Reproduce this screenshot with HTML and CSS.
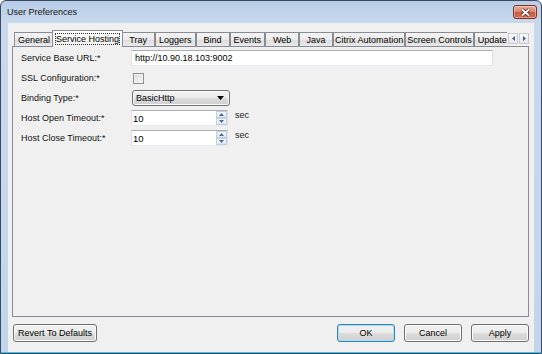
FILE: index.html
```html
<!DOCTYPE html>
<html>
<head>
<meta charset="utf-8">
<title>User Preferences</title>
<link rel="stylesheet" href="styles.css">
</head>
<body>
<div class="window">
  <div class="titlebar">
    <span class="title">User Preferences</span>
    <button class="close" aria-label="Close">
      <svg width="11" height="9" viewBox="0 0 11 9"><path d="M2 1.5 L9 7.5 M9 1.5 L2 7.5" stroke="#5a2016" stroke-width="3.4" fill="none"/><path d="M2 1.5 L9 7.5 M9 1.5 L2 7.5" stroke="#ffffff" stroke-width="1.8" fill="none"/></svg>
    </button>
  </div>
  <div class="client">
    <div class="tabcontrol">
      <div class="tabstrip">
        <div class="tabs">
          <div class="tab">General</div>
          <div class="tab active"><span class="focus">Service Hosting</span></div>
          <div class="tab">Tray</div>
          <div class="tab">Loggers</div>
          <div class="tab">Bind</div>
          <div class="tab">Events</div>
          <div class="tab">Web</div>
          <div class="tab">Java</div>
          <div class="tab tight">Citrix Automation</div>
          <div class="tab tight">Screen Controls</div>
          <div class="tab">Updates</div>
        </div>
        <div class="scroller">
          <button class="arrow" aria-label="Scroll left"><svg width="3" height="5" viewBox="0 0 3 5"><path d="M3 0 L0 2.5 L3 5 Z" fill="#3b5fa0"/></svg></button>
          <button class="arrow" aria-label="Scroll right"><svg width="3" height="5" viewBox="0 0 3 5"><path d="M0 0 L3 2.5 L0 5 Z" fill="#3b5fa0"/></svg></button>
        </div>
      </div>
      <div class="panel">
        <div class="form">
          <div class="label">Service Base URL:*</div>
          <div class="field"><div class="textbox url">http://10.90.18.103:9002</div></div>

          <div class="label">SSL Configuration:*</div>
          <div class="field"><div class="checkbox"></div></div>

          <div class="label">Binding Type:*</div>
          <div class="field">
            <div class="combo"><span class="value">BasicHttp</span>
              <svg width="7" height="4" viewBox="0 0 7 4"><path d="M0 0 H7 L3.5 4 Z" fill="#000"/></svg>
            </div>
          </div>

          <div class="label">Host Open Timeout:*</div>
          <div class="field">
            <div class="spin"><span class="value">10</span>
              <div class="spin-buttons">
                <div class="spin-btn"><svg width="5" height="3" viewBox="0 0 5 3"><path d="M0 3 L2.5 0 L5 3 Z" fill="#4d6a9a"/></svg></div>
                <div class="spin-btn"><svg width="5" height="3" viewBox="0 0 5 3"><path d="M0 0 L5 0 L2.5 3 Z" fill="#4d6a9a"/></svg></div>
              </div>
            </div>
            <span class="unit">sec</span>
          </div>

          <div class="label">Host Close Timeout:*</div>
          <div class="field">
            <div class="spin"><span class="value">10</span>
              <div class="spin-buttons">
                <div class="spin-btn"><svg width="5" height="3" viewBox="0 0 5 3"><path d="M0 3 L2.5 0 L5 3 Z" fill="#4d6a9a"/></svg></div>
                <div class="spin-btn"><svg width="5" height="3" viewBox="0 0 5 3"><path d="M0 0 L5 0 L2.5 3 Z" fill="#4d6a9a"/></svg></div>
              </div>
            </div>
            <span class="unit">sec</span>
          </div>
        </div>
      </div>
    </div>
    <div class="footer">
      <button class="btn revert">Revert To Defaults</button>
      <button class="btn default">OK</button>
      <button class="btn">Cancel</button>
      <button class="btn">Apply</button>
    </div>
  </div>
</div>
</body>
</html>
```

FILE: styles.css
```css
* { box-sizing: border-box; }
html, body { margin: 0; padding: 0; }
body {
  font-family: "Liberation Sans", Arial, sans-serif;
  font-size: 9px;
  color: #000;
  background: #ffffff;
}

.window {
  width: 542px;
  height: 354px;
  display: flex;
  flex-direction: column;
  border: 1px solid #3a4a60;
  border-radius: 6px 6px 0 0;
  padding: 0 7px 1px;
  background: linear-gradient(to bottom, #b7cce6 0, #c8d9ee 22px, #c3d5ec 100%);
  box-shadow: inset 0 -1px 0 #3fc2ea;
}

.titlebar {
  height: 22px;
  margin: 0 -7px;
  padding: 0 4px 0 6px;
  display: flex;
  align-items: center;
}
.title { flex: 1; color: #141414; font-size: 9px; }

.close {
  width: 24px;
  height: 14px;
  padding: 0;
  border: 1px solid #7b3426;
  border-radius: 3px;
  display: flex;
  align-items: center;
  justify-content: center;
  background: linear-gradient(to bottom, #eaab9b 0, #dc8a74 45%, #c95a3f 52%, #d36c50 100%);
  box-shadow: inset 0 0 0 1px rgba(255,255,255,0.35);
}

.client {
  flex: 1;
  display: flex;
  flex-direction: column;
  background: #f0f0f0;
  padding: 7px 5px 10px 4px;
}

.tabcontrol { flex: 1; display: flex; flex-direction: column; }

.tabstrip {
  height: 17px;
  margin-bottom: -1px;
  display: flex;
}
.tabs {
  flex: 1;
  min-width: 0;
  display: flex;
  align-items: flex-end;
  padding: 0 0 1px 2px;
  overflow: hidden;
}
.tab {
  flex: none;
  height: 14px;
  min-width: 34px;
  padding: 0 3px;
  display: flex;
  align-items: center;
  justify-content: center;
  white-space: nowrap;
  border: 1px solid #898c95;
  border-bottom: 0;
  background: linear-gradient(to bottom, #f4f4f4 0, #ebebeb 50%, #dddddd 51%, #e9e9e9 100%);
}
.tab.tight { padding: 0 1px; }
.tab.active {
  position: relative;
  z-index: 1;
  height: 17px;
  margin: 0 -2px -1px -2px;
  padding: 0 2px 1px;
  background: linear-gradient(to bottom, #ffffff 0, #f6f6f6 60%, #f0f0f0 100%);
}
.focus {
  border: 1px dotted #333;
  padding: 0;
  line-height: 10px;
}

.scroller {
  align-self: flex-start;
  display: flex;
  gap: 1px;
  margin: 3px 0 0 1px;
}
.arrow {
  width: 10px;
  height: 11px;
  padding: 0;
  border: 1px solid #c7cbd2;
  background: linear-gradient(to bottom, #fbfbfb, #e6e6e6);
  display: flex;
  align-items: center;
  justify-content: center;
}

.panel {
  flex: 1;
  border: 1px solid #898c95;
  background: #f0f0f0;
  padding: 3px 0 0 8px;
}

.form {
  display: grid;
  grid-template-columns: 110px max-content;
  grid-auto-rows: 16px;
  row-gap: 4px;
  align-items: center;
}
.label { white-space: nowrap; color: #111; }
.field { display: flex; align-items: center; height: 16px; }

.textbox {
  height: 16px;
  border: 1px solid;
  border-color: #abadb3 #dbdfe6 #e3e9ef #e2e3ea;
  background: #fff;
  padding: 0 3px;
  display: flex;
  align-items: center;
}
.url { width: 362px; }

.checkbox {
  width: 11px;
  height: 11px;
  margin-left: 2px;
  border: 1px solid #8e8f8f;
  background: linear-gradient(135deg, #d8d8d8, #fbfbfb);
  box-shadow: inset 0 0 0 1px #f2f2f2;
}

.combo {
  width: 98px;
  height: 16px;
  margin-left: 1px;
  border: 1px solid #707070;
  border-radius: 3px;
  padding: 0 5px 0 3px;
  display: flex;
  align-items: center;
  background: linear-gradient(to bottom, #f2f2f2 0, #ebebeb 50%, #dddddd 50%, #cfcfcf 100%);
  box-shadow: inset 0 0 0 1px #fcfcfc;
}
.combo .value { flex: 1; }

.spin {
  width: 97px;
  height: 16px;
  display: flex;
  border: 1px solid;
  border-color: #abadb3 #dbdfe6 #e3e9ef #e2e3ea;
  background: #fff;
}
.spin .value { flex: 1; padding-left: 1px; display: flex; align-items: center; font-size: 9.5px; }
.spin-buttons {
  width: 12px;
  display: flex;
  flex-direction: column;
  padding: 0 0 0 1px;
}
.spin-btn {
  flex: 1;
  border: 1px solid #c2cfe0;
  background: linear-gradient(to bottom, #f5f8fc, #dde6f1);
  display: flex;
  align-items: center;
  justify-content: center;
}
.unit { align-self: flex-start; margin-left: 7px; color: #222; }

.footer {
  display: flex;
  gap: 9px;
  height: 18px;
  margin-top: 7px;
}
.btn {
  width: 58px;
  height: 18px;
  padding: 0;
  font: inherit;
  color: #000;
  border: 1px solid #707070;
  border-radius: 3px;
  background: linear-gradient(to bottom, #f2f2f2 0, #ebebeb 50%, #dddddd 50%, #cfcfcf 100%);
  box-shadow: inset 0 0 0 1px #fcfcfc;
}
.btn.revert { width: 84px; margin-left: 1px; margin-right: auto; }
.btn.default {
  border-color: #3c7fb1;
  box-shadow: inset 0 0 0 1px #9fe2f8;
}
```
